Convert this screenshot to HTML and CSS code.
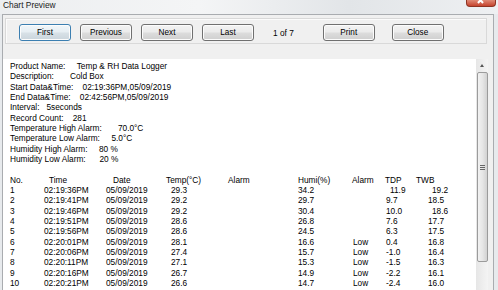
FILE: index.html
```html
<!DOCTYPE html>
<html lang="en">
<head>
  <meta charset="UTF-8">
  <title>Chart Preview</title>
  <link rel="stylesheet" href="styles.css">
</head>
<body>
  <div class="titlebar">
    <span class="title">Chart Preview</span>
    <span class="close-x">
      <svg width="28" height="6" viewBox="0 0 28 6">
        <path d="M11 -3 L16 3 M16 -3 L11 3" stroke="#fff" stroke-width="2" fill="none"/>
      </svg>
    </span>
  </div>

  <div class="window">
    <div class="toolbar">
      <button class="btn focused">First</button>
      <button class="btn">Previous</button>
      <button class="btn">Next</button>
      <button class="btn">Last</button>
      <span class="page">1 of 7</span>
      <button class="btn print">Print</button>
      <button class="btn close">Close</button>
    </div>

    <div class="viewer">
      <div class="sheet">
        <div class="info">
          <div>Product Name:     Temp &amp; RH Data Logger</div>
          <div>Description:       Cold Box</div>
          <div>Start Data&amp;Time:    02:19:36PM,05/09/2019</div>
          <div>End Data&amp;Time:    02:42:56PM,05/09/2019</div>
          <div>Interval:   5seconds</div>
          <div>Record Count:    281</div>
          <div>Temperature High Alarm:       70.0°C</div>
          <div>Temperature Low Alarm:     5.0°C</div>
          <div>Humidity High Alarm:     80 %</div>
          <div>Humidity Low Alarm:      20 %</div>
        </div>

        <div class="records">
          <div class="row head">
            <span>No.</span><span class="h-time">Time</span><span class="h-date">Date</span>
            <span>Temp(°C)</span><span>Alarm</span><span>Humi(%)</span>
            <span>Alarm</span><span>TDP</span><span>TWB</span>
          </div>
          <div class="row">
            <span>1</span><span>02:19:36PM</span><span>05/09/2019</span><span class="v-temp">29.3</span><span></span>
            <span>34.2</span><span></span><span class="v-tdp sp">11.9</span><span class="v-twb sp">19.2</span>
          </div>
          <div class="row">
            <span>2</span><span>02:19:41PM</span><span>05/09/2019</span><span class="v-temp">29.2</span><span></span>
            <span>29.7</span><span></span><span class="v-tdp">9.7</span><span class="v-twb">18.5</span>
          </div>
          <div class="row">
            <span>3</span><span>02:19:46PM</span><span>05/09/2019</span><span class="v-temp">29.2</span><span></span>
            <span>30.4</span><span></span><span class="v-tdp">10.0</span><span class="v-twb sp">18.6</span>
          </div>
          <div class="row">
            <span>4</span><span>02:19:51PM</span><span>05/09/2019</span><span class="v-temp">28.6</span><span></span>
            <span>26.8</span><span></span><span class="v-tdp">7.6</span><span class="v-twb">17.7</span>
          </div>
          <div class="row">
            <span>5</span><span>02:19:56PM</span><span>05/09/2019</span><span class="v-temp">28.6</span><span></span>
            <span>24.5</span><span></span><span class="v-tdp">6.3</span><span class="v-twb">17.5</span>
          </div>
          <div class="row">
            <span>6</span><span>02:20:01PM</span><span>05/09/2019</span><span class="v-temp">28.1</span><span></span>
            <span>16.6</span><span class="v-alarm">Low</span><span class="v-tdp">0.4</span><span class="v-twb">16.8</span>
          </div>
          <div class="row">
            <span>7</span><span>02:20:06PM</span><span>05/09/2019</span><span class="v-temp">27.4</span><span></span>
            <span>15.7</span><span class="v-alarm">Low</span><span class="v-tdp">-1.0</span><span class="v-twb">16.4</span>
          </div>
          <div class="row">
            <span>8</span><span>02:20:11PM</span><span>05/09/2019</span><span class="v-temp">27.1</span><span></span>
            <span>15.3</span><span class="v-alarm">Low</span><span class="v-tdp">-1.5</span><span class="v-twb">16.3</span>
          </div>
          <div class="row">
            <span>9</span><span>02:20:16PM</span><span>05/09/2019</span><span class="v-temp">26.7</span><span></span>
            <span>14.9</span><span class="v-alarm">Low</span><span class="v-tdp">-2.2</span><span class="v-twb">16.1</span>
          </div>
          <div class="row">
            <span>10</span><span>02:20:21PM</span><span>05/09/2019</span><span class="v-temp">26.6</span><span></span>
            <span>14.7</span><span class="v-alarm">Low</span><span class="v-tdp">-2.4</span><span class="v-twb">16.0</span>
          </div>
        </div>
      </div>

      <div class="scrollbar">
        <div class="arrow"></div>
        <div class="thumb"><span class="grip"></span></div>
      </div>
    </div>
  </div>
</body>
</html>
```

FILE: styles.css
```css
body {
  margin: 0;
  height: 290px;
  overflow: hidden;
  background: #e7eaed;
  font-family: "Liberation Sans", Arial, sans-serif;
  color: #000;
}

/* title bar */
.titlebar {
  height: 14px;
  display: flex;
  align-items: flex-start;
  background: linear-gradient(90deg, #eceef0 0%, #f4f5f6 40%, #e2e5e8 70%, #eef0f2 100%);
}
.title {
  padding-left: 3px;
  font-size: 8.4px;
  line-height: 11px;
  color: #1a1a1a;
}
.close-x {
  margin-left: auto;
  margin-right: 2px;
  width: 30px;
  height: 7px;
  display: flex;
  justify-content: center;
  background: linear-gradient(#e08a76, #c5432d);
  border: 1px solid #8e3322;
  border-top: none;
  border-radius: 0 0 4px 4px;
  box-sizing: border-box;
}

/* window body */
.window {
  margin: 0 4px 0 2px;
  border: 1px solid #a9acb0;
  border-bottom: none;
  background: #f0f0f0;
  height: 275px;
}

.toolbar {
  display: flex;
  align-items: center;
  margin: 3px 6px 0 2px;
  padding: 5px 0 2px 13px;
  border: 1px solid #d9d9d9;
  box-shadow: inset 1px 1px 0 #fbfbfb;
}
.btn {
  width: 52px;
  height: 17px;
  margin: 0 9px 0 0;
  padding: 0;
  font-family: "Liberation Sans", Arial, sans-serif;
  font-size: 8.2px;
  color: #000;
  border: 1px solid #707070;
  border-radius: 3px;
  background: linear-gradient(#f3f3f3 0%, #ebebeb 48%, #dddddd 52%, #cfcfcf 100%);
  box-shadow: inset 0 0 0 1px #fcfcfc;
}
.btn.focused {
  border-color: #3c7fb1;
  background: linear-gradient(#f1f6f9 0%, #e6eef3 48%, #d8e1e7 52%, #cad5dc 100%);
}
.page {
  margin-left: 10px;
  font-size: 8.3px;
}
.btn.print {
  margin-left: 29px;
}
.btn.close {
  margin-left: 8px;
}

/* preview area */
.viewer {
  display: flex;
  margin: 15px 5px 0 0;
  height: 231px;
  overflow: hidden;
}
.sheet {
  flex: 1;
  background: #fff;
  padding: 2px 0 0 7px;
  font-size: 8.3px;
  line-height: 10.33px;
}
.info div {
  white-space: pre;
}
.records {
  margin-top: 10.33px;
}
.row {
  display: grid;
  grid-template-columns: 34px 62px 60px 62px 70px 54px 33px 31px auto;
  white-space: nowrap;
}
.h-time { padding-left: 5px; }
.h-date { padding-left: 7px; }
.v-temp { padding-left: 5px; }
.v-alarm { padding-left: 1px; }
.v-tdp { padding-left: 1px; }
.v-tdp.sp { padding-left: 5px; }
.v-twb { padding-left: 12px; }
.v-twb.sp { padding-left: 16px; }

/* scrollbar */
.scrollbar {
  width: 12px;
  background: linear-gradient(90deg, #e6e6e6, #f4f4f4);
}
.arrow {
  height: 13px;
  position: relative;
}
.arrow::after {
  content: "";
  position: absolute;
  left: 4px;
  top: 5px;
  border-left: 2.5px solid transparent;
  border-right: 2.5px solid transparent;
  border-bottom: 3px solid #555;
}
.thumb {
  height: 190px;
  margin-left: 1px;
  border: 1px solid #9b9b9b;
  border-radius: 2px;
  box-sizing: border-box;
  background: linear-gradient(90deg, #f2f2f2 0%, #e6e6e6 50%, #d2d2d2 100%);
  display: flex;
  align-items: center;
  justify-content: center;
}
.grip {
  width: 5px;
  height: 5px;
  background: repeating-linear-gradient(#666 0 1px, transparent 1px 2px);
}
```
